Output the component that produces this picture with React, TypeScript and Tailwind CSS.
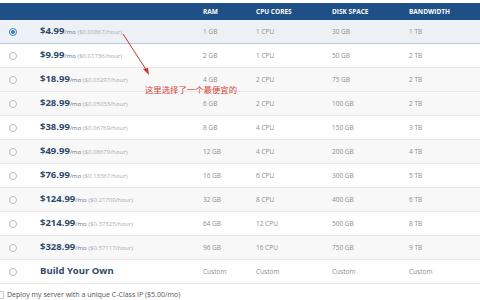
import React from 'react';

type Plan = {
  price: string;
  hourly: string;
  ram: string;
  cpu: string;
  disk: string;
  bw: string;
  bg: string;
};

const plans: Plan[] = [
  { price: '$4.99', hourly: '($0.00867/hour)', ram: '1 GB', cpu: '1 CPU', disk: '30 GB', bw: '1 TB', bg: 'bg-[#edf1f5]' },
  { price: '$9.99', hourly: '($0.01736/hour)', ram: '2 GB', cpu: '1 CPU', disk: '50 GB', bw: '2 TB', bg: 'bg-white' },
  { price: '$18.99', hourly: '($0.03297/hour)', ram: '4 GB', cpu: '2 CPU', disk: '75 GB', bw: '2 TB', bg: 'bg-[#f8f8f8]' },
  { price: '$28.99', hourly: '($0.05033/hour)', ram: '6 GB', cpu: '2 CPU', disk: '100 GB', bw: '2 TB', bg: 'bg-[#f8f8f8]' },
  { price: '$38.99', hourly: '($0.06769/hour)', ram: '8 GB', cpu: '4 CPU', disk: '150 GB', bw: '3 TB', bg: 'bg-white' },
  { price: '$49.99', hourly: '($0.08679/hour)', ram: '12 GB', cpu: '4 CPU', disk: '200 GB', bw: '4 TB', bg: 'bg-[#f8f8f8]' },
  { price: '$76.99', hourly: '($0.13367/hour)', ram: '16 GB', cpu: '6 CPU', disk: '300 GB', bw: '5 TB', bg: 'bg-white' },
  { price: '$124.99', hourly: '($0.21700/hour)', ram: '32 GB', cpu: '8 CPU', disk: '400 GB', bw: '6 TB', bg: 'bg-[#f8f8f8]' },
  { price: '$214.99', hourly: '($0.37325/hour)', ram: '64 GB', cpu: '12 CPU', disk: '500 GB', bw: '8 TB', bg: 'bg-white' },
  { price: '$328.99', hourly: '($0.57117/hour)', ram: '96 GB', cpu: '16 CPU', disk: '750 GB', bw: '9 TB', bg: 'bg-[#f8f8f8]' },
];

const cols = 'grid grid-cols-[40px_163px_53px_76px_77px_1fr] items-center';

function Radio({ checked }: { checked?: boolean }) {
  if (checked) {
    return (
      <span className="ml-[9px] flex h-[8px] w-[8px] items-center justify-center rounded-full border border-[#2f7cc4] bg-white">
        <span className="h-[4px] w-[4px] rounded-full bg-[#2f7cc4]" />
      </span>
    );
  }
  return <span className="ml-[9px] block h-[8px] w-[8px] rounded-full border border-[#b9b9b9] bg-white" />;
}

export default function App() {
  return (
    <div className="relative h-[300px] w-[480px] overflow-hidden bg-white" style={{ fontFamily: '"Open Sans", sans-serif' }}>
      <div className="h-[3px]" />
      <div className={`${cols} h-[17px] bg-[#1e4f86] text-[6.5px] font-bold text-white`}>
        <span />
        <span />
        <span>RAM</span>
        <span>CPU CORES</span>
        <span>DISK SPACE</span>
        <span>BANDWIDTH</span>
      </div>

      {plans.map((p, i) => (
        <div
          key={p.price}
          className={`${cols} h-[24px] border-b ${i === 0 ? 'border-[#b9cad9]' : 'border-[#e7e7e7]'} ${p.bg} text-[6.5px] text-[#8d8d8d]`}
        >
          <Radio checked={i === 0} />
          <span className="whitespace-nowrap">
            <span className="text-[9.5px] font-bold text-[#2e4a68]">{p.price}</span>
            <span className="text-[6px] text-[#5d7189]">/mo </span>
            <span className="text-[6px] text-[#a3abb3]">{p.hourly}</span>
          </span>
          <span>{p.ram}</span>
          <span>{p.cpu}</span>
          <span>{p.disk}</span>
          <span>{p.bw}</span>
        </div>
      ))}

      <div className={`${cols} h-[24px] border-b border-[#e7e7e7] bg-white text-[6.5px] text-[#8d8d8d]`}>
        <Radio />
        <span className="text-[9.5px] font-bold text-[#2e4a68]">Build Your Own</span>
        <span>Custom</span>
        <span>Custom</span>
        <span>Custom</span>
        <span>Custom</span>
      </div>

      <div className="mt-[6px] flex items-center gap-[3px]">
        <span className="ml-[-4px] block h-[8px] w-[8px] rounded-[1px] border border-[#c8c8c8] bg-white" />
        <span className="text-[7px] text-[#555]">Deploy my server with a unique C-Class IP ($5.00/mo)</span>
      </div>

      <svg className="absolute left-0 top-0" width="480" height="300">
        <line x1="123" y1="34" x2="147" y2="71" stroke="#c0392b" strokeWidth="1" />
        <polygon points="149,75 143,69 148,68" fill="#c0392b" />
      </svg>
      <span
        className="absolute left-[145px] top-[85px] text-[8.4px] leading-none text-[#d9443a]"
        style={{ fontFamily: '"Noto Sans CJK SC", sans-serif' }}
      >
        这里选择了一个最便宜的
      </span>
    </div>
  );
}
